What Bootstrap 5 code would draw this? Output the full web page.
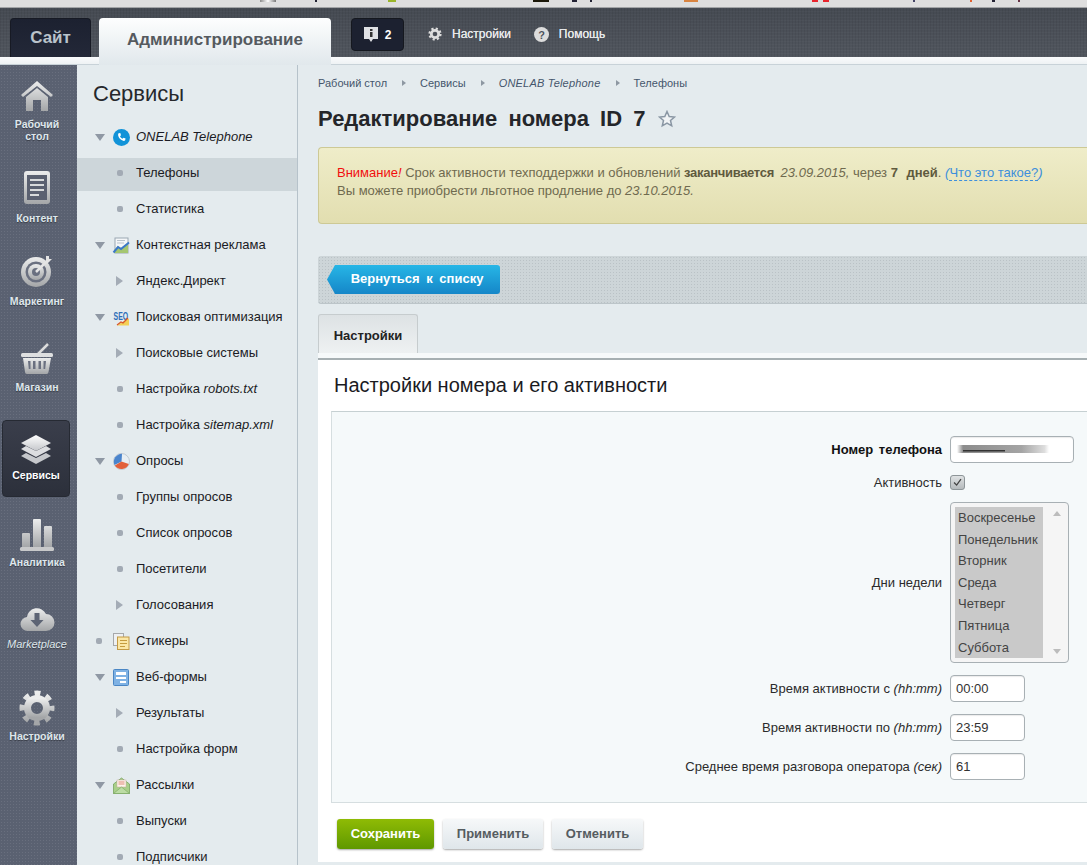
<!DOCTYPE html>
<html lang="ru">
<head>
  <meta charset="UTF-8" />
  <title>Редактирование номера ID 7</title>
  <link href="https://cdn.jsdelivr.net/npm/bootstrap@5.3.0/dist/css/bootstrap.min.css" rel="stylesheet">
  <style>
    html, body { height: 100%; overflow: hidden; }
    body { font-family: "Liberation Sans", Arial, sans-serif; font-size: 13px; color: #1c1c1c; background: #e4ebee; width: 1087px; height: 865px; }
    a { text-decoration: none; color: inherit; }
    .svg-defs { width: 0; height: 0; position: absolute; }

    /* top */
    .scrap-bar { height: 8px; background: #dedede; border-bottom: 1px solid #a2a4a6; }
    .scrap-bar div { height: 2px; background: linear-gradient(90deg, transparent 260px, #8a8a8a 260px, #fff 268px, #777 276px, transparent 276px, transparent 315px, #223 315px, #223 317px, transparent 317px, transparent 388px, #9ab52a 388px, #9ab52a 396px, transparent 396px, transparent 533px, #1b1708 533px, #1b1708 549px, transparent 549px, transparent 572px, #223 572px, #223 577px, transparent 577px, transparent 590px, #223 590px, #223 592px, transparent 592px, transparent 684px, #d98440 684px, #d98440 698px, transparent 698px, transparent 812px, #e8242c 812px, #e8242c 818px, transparent 818px, transparent 823px, #e8242c 823px, #e8242c 829px, transparent 829px, transparent 913px, #446 913px, #446 915px, transparent 915px, transparent 970px, #e06030 970px, #e06030 972px, transparent 972px, transparent 992px, #223 992px, #223 995px, transparent 995px, transparent 1018px, #634 1018px, #634 1020px, transparent 1020px); }
    .top-head { height: 49px; padding: 10px 0 0 10px; background-color: #4b5058; background-image: linear-gradient(rgba(255,255,255,.025) 1px, transparent 1px), linear-gradient(90deg, rgba(0,0,0,.06) 1px, transparent 1px), linear-gradient(#454a52, #51565e); background-size: 3px 3px, 3px 3px, 100% 100%; }
    .site-tab { width: 81px; height: 39px; background: linear-gradient(#1c2130, #232838); border: 1px solid #171a24; border-bottom: 0; border-radius: 4px 4px 0 0; color: #b9c3cb; font-size: 17px; font-weight: 700; }
    .admin-tab { width: 232px; height: 47px; margin-left: 8px; padding-top: 9px; background: linear-gradient(#fdfefe, #e1e8ec); border-radius: 4px 4px 0 0; color: #555a5f; font-size: 17px; font-weight: 700; position: relative; z-index: 2; text-align: center; }
    .info-btn { width: 53px; height: 33px; margin-left: 20px; background: #1c2130; border: 1px solid #15181f; border-radius: 4px; color: #fff; font-size: 12px; font-weight: 700; gap: 6px; }
    .head-link { color: #e4e6e8; font-size: 12px; margin-top: 9px; height: 14px; gap: 10px; text-shadow: 0 0 .4px #fff; }
    .help-link { margin-left: 23px; }
    .white-strip { height: 8px; background: linear-gradient(#fafbfc, #eef2f4); border-bottom: 1px solid #c8d2d8; }

    /* rail */
    .page-body { height: 800px; }
    .side-rail { width: 77px; flex: none; background-color: #5a6171; background-image: radial-gradient(rgba(255,255,255,.09) .7px, transparent .9px); background-size: 3px 3px; color: #dfe7ec; font-size: 10.5px; font-weight: 700; line-height: 12px; text-align: center; text-shadow: 0 1px 1px rgba(0,0,0,.4); }
    .rail-item { display: block; width: 68px; margin-left: 3px; }
    .rail-item svg { display: block; margin: 0 auto 5px; width: 36px; height: 36px; }
    .ri-1 { margin-top: 12px; }
    .ri-2 { margin-top: 28px; }
    .ri-2 svg { margin-bottom: 6px; }
    .ri-3 { margin-top: 29px; }
    .ri-3 svg { margin-bottom: 6px; }
    .ri-4 { margin-top: 34px; }
    .ri-4 svg { margin-bottom: 4px; }
    .ri-5 { margin: 27px 0 0 2px; padding: 11px 0 16px; background: linear-gradient(#3a3e4b, #2c303b); border: 1px solid #262a33; border-radius: 4px; color: #fff; height: 77px; }
    .ri-5 svg { margin-bottom: 1px; }
    .ri-6 { margin-top: 19px; }
    .ri-6 svg { margin-bottom: 4px; }
    .ri-7 { margin-top: 34px; font-size: 11px; font-style: italic; font-weight: 400; }
    .ri-7 svg { margin-bottom: 0; }
    .ri-8 { margin-top: 40px; }
    .ri-8 svg { margin-bottom: 4px; }

    /* tree */
    .tree-menu { width: 221px; flex: none; background: #e4ebee; border-right: 1px solid #b6c2ca; color: #1b1b24; }
    .tree-title { font-size: 22px; line-height: 26px; padding: 16px 0 0 16px; height: 54px; color: #26282c; }
    .tree-row { height: 36px; padding-left: 18px; }
    .tree-row.is-open { height: 33px; margin-top: 3px; padding-bottom: 3px; background: #cdd6da; }
    .tree-toggle { width: 18px; flex: none; }
    .tree-ico { width: 23px; flex: none; }
    .tree-ico svg { display: block; width: 17px; height: 17px; overflow: visible; }
    .arr-down { display: block; width: 0; height: 0; margin-left: 0; border: 5px solid transparent; border-top: 7px solid #8f98a4; border-bottom: 0; }
    .arr-right { display: block; width: 0; height: 0; margin-left: 3px; border: 5px solid transparent; border-left: 7px solid #a4acb6; border-right: 0; }
    .bullet { display: block; width: 6px; height: 6px; margin-left: 4px; border-radius: 2px; background: #a2aab4; }
    .bullet-top { margin-left: 1px; }

    /* main */
    .main-col { flex: 1 1 auto; min-width: 0; padding-left: 20px; overflow: hidden; }
    .crumbs { height: 35px; padding-top: 11px; color: #44566c; font-size: 11px; line-height: 14px; }
    .crumbs em { letter-spacing: .2px; }
    .crumb-arrow { width: 0; height: 0; margin: 0 14px 0 15px; border: 3.5px solid transparent; border-left: 4px solid #8e98a2; border-right: 0; }
    .page-title { font-size: 22px; font-weight: 700; line-height: 26px; margin: 0; height: 47px; padding-top: 6px; color: #24262a; word-spacing: 5px; }
    .page-title svg { width: 18px; height: 18px; margin-left: 1px; vertical-align: -2px; }
    .notice-box { height: 77px; padding: 16px 0 0 18px; margin: 0; border: 1px solid #cdc995; border-right: 0; border-radius: 4px 0 0 4px; background: linear-gradient(#efedc9, #e2deb0); color: #6f6a4f; font-size: 13px; line-height: 18px; white-space: nowrap; }
    .notice-box b { color: #5f5a3e; letter-spacing: -.3px; }
    .notice-box b.days-left { letter-spacing: 0; word-spacing: 5px; }
    .notice-box .warn { color: #f10e0e; }
    .notice-box .end-date { margin-left: 3px; }
    .notice-box .what { color: #3d8fdc; }
    .notice-box .what span { border-bottom: 1px dashed #3d8fdc; font-style: normal; }
    .tool-bar { height: 48px; margin-top: 32px; padding: 9px 0 0 9px; background-color: #cdd5d8; background-image: radial-gradient(rgba(120,130,135,.22) .7px, transparent .9px); background-size: 3px 3px; border-bottom: 1px solid #bcc5c9; border-radius: 3px 0 0 3px; }
    .btn.back-btn { display: block; width: 173px; height: 29px; padding: 0 0 2px 7px; border: 0; border-radius: 0 3px 3px 0; background: linear-gradient(#27b6e6, #1586c8); color: #fff; font-size: 13px; font-weight: 700; line-height: 27px; word-spacing: 3px; clip-path: polygon(0 50%, 8px 0, 100% 0, 100% 100%, 8px 100%); }
    .tab-line { height: 46px; margin-top: 10px; border-bottom: 2px solid #a6afb2; box-shadow: inset 0 -5px 0 #f6f9fa; }
    .nav-tabs.tab-strip { border: 0; }
    .tab-strip .nav-link { width: 100px; height: 39px; padding: 0; border: 1px solid #c6ccce; border-bottom: 0; border-radius: 3px 3px 0 0; background: linear-gradient(#dde2e4, #eef1f2); color: #222; font-size: 13px; font-weight: 700; line-height: 41px; text-align: center; }
    .sheet { height: 502px; background: #fff; }
    .sheet-title { margin: 0; height: 51px; padding: 13px 0 0 16px; font-size: 20px; font-weight: 400; line-height: 25px; color: #1b1b1f; }
    .form-box { margin-left: 13px; height: 392px; padding: 24px 0 0; background: #f5f9fa; border: 1px solid #d6dee0; border-top-color: #c6d0d2; border-right: 0; row-gap: 12px; }
    .fld-label { flex: 0 0 610px; margin: 0 8px 0 0; line-height: 15px; text-align: right; color: #2b2b2b; font-size: 13px; }
    .fld-label.strong { font-weight: 700; word-spacing: 2px; color: #111; }
    .form-control.fld-input { width: 75px; height: 27px; padding: 0 5px; border: 1px solid #a8b0b4; border-radius: 4px; box-shadow: inset 0 1px 1px rgba(0,0,0,.08); color: #333; font-size: 13px; font-family: inherit; }
    .phone-box { width: 124px; height: 27px; border: 1px solid #a8b0b4; border-radius: 4px; background: #fff; padding: 6px 0 0 6px; box-shadow: inset 0 1px 1px rgba(0,0,0,.08); }
    .phone-blur { display: block; width: 92px; height: 12px; filter: blur(.7px); background: linear-gradient(#333, #333) 6px 7px / 42px 1.500px no-repeat, linear-gradient(90deg, #fff, #8c8c8c 6px, #a4a4a4 70%, #ddd 95%, #fff) 0 2px / 100% 8px no-repeat; }
    .form-check-input.act-check { width: 15px; height: 15px; margin: 0; border: 1px solid #8d9598; border-radius: 3px; background-color: #c9cdce; background-image: url("data:image/svg+xml,%3csvg xmlns='http://www.w3.org/2000/svg' viewBox='0 0 15 15'%3e%3cpath fill='none' stroke='%23444' stroke-width='1.5' d='M3.5 7.5l3 3 5-7'/%3e%3c/svg%3e"), linear-gradient(#dfe2e3, #b5babc); background-size: 100% 100%; }
    .days-wrap { position: relative; width: 119px; height: 161px; }
    .days-wrap::before, .days-wrap::after { content: ""; position: absolute; right: 8px; width: 0; height: 0; border: 4px solid transparent; pointer-events: none; }
    .days-wrap::before { top: 9px; border-top: 0; border-bottom: 5px solid #bcbcbc; }
    .days-wrap::after { bottom: 9px; border-bottom: 0; border-top: 5px solid #bcbcbc; }
    .days-select { display: block; width: 119px; height: 161px; padding: 4px 25px 4px 4px; border: 1px solid #a8b0b4; border-radius: 4px; background: #f5f5f5; color: #444; font: 13px "Liberation Sans", Arial, sans-serif; overflow: hidden; outline: 0; }
    .days-select option { height: 21.6px; padding: 3px 0 0 3px; line-height: 15px; min-height: 21.6px; background: #c9c9c9 linear-gradient(#c9c9c9, #c9c9c9); color: #444; }
    .act-bar { padding: 16px 0 0 19px; gap: 9px; }
    .btn.act-btn { height: 30px; padding: 0; border: 0; border-radius: 3px; font-size: 13px; font-weight: 700; line-height: 30px; box-shadow: 0 1px 2px rgba(0,0,0,.35); }
    .btn.act-save { width: 97px; background: linear-gradient(#8fbb05, #5f9800); color: #fff; }
    .btn.act-plain { background: linear-gradient(#f6f8f9, #dfe6ea); color: #555c60; }
    .w-apply { width: 100px; }
    .w-cancel { width: 91px; }
  </style>
</head>
<body>
  <svg class="svg-defs">
    <defs>
      <linearGradient id="metal" x1="0" y1="0" x2="0" y2="1">
        <stop offset="0" stop-color="#eceded" />
        <stop offset="1" stop-color="#a4a6a8" />
      </linearGradient>
      <linearGradient id="metalW" x1="0" y1="0" x2="0" y2="1">
        <stop offset="0" stop-color="#fff" />
        <stop offset="1" stop-color="#c4c6ca" />
      </linearGradient>
    </defs>
  </svg>

  <div class="scrap-bar"><div></div></div>

  <header class="top-head d-flex align-items-start">
    <a href="#" class="site-tab d-flex align-items-center justify-content-center">Сайт</a>
    <a href="#" class="admin-tab">Администрирование</a>
    <a href="#" class="info-btn d-flex align-items-center justify-content-center">
      <svg width="15" height="17" viewBox="0 0 15 17"><path fill="#dfe1e4" d="M0 1h14v12H9l-2 3-2-3H0z" /><path fill="#333" d="M6 3h2.500v2H6zM6 6h2.500v5H6z" /></svg>
      2
    </a>
    <a href="#" class="head-link d-flex align-items-center ms-4">
      <svg width="14" height="14" viewBox="0 0 36 36"><circle cx="18" cy="18" r="14" fill="none" stroke="#ddd" stroke-width="6" stroke-dasharray="5.500 5.500" /><circle cx="18" cy="18" r="9.500" fill="none" stroke="#ddd" stroke-width="7" /></svg>
      Настройки
    </a>
    <a href="#" class="head-link help-link d-flex align-items-center">
      <svg width="15" height="15" viewBox="0 0 15 15"><circle cx="7.500" cy="7.500" r="7.500" fill="#dcdcdc" /><text x="7.500" y="11.500" text-anchor="middle" font-size="11" font-weight="700" font-family="Liberation Sans" fill="#4b5058">?</text></svg>
      Помощь
    </a>
  </header>
  <div class="white-strip"></div>

  <div class="page-body d-flex">
    <!-- Left rail -->
    <nav class="side-rail">
      <a href="#" class="rail-item ri-1">
        <svg viewBox="0 0 36 36"><path fill="url(#metal)" d="M18 4 2 18l2 2L18 9l14 11 2-2zM7 20 18 11l11 9v14H22V23h-8v11H7z" /></svg>
        Рабочий<br>стол
      </a>
      <a href="#" class="rail-item ri-2">
        <svg viewBox="0 0 36 36"><rect x="5" y="1" width="26" height="33" rx="3" fill="url(#metal)" /><rect x="8" y="5" width="20" height="25" fill="#5a6070" /><path fill="#d8dadb" d="M11 9h14v2H11zM11 14h14v2H11zM11 19h14v2H11zM11 24h9v2h-9z" /></svg>
        Контент
      </a>
      <a href="#" class="rail-item ri-3">
        <svg viewBox="0 0 36 36"><circle cx="17" cy="19" r="15" fill="url(#metal)" /><circle cx="17" cy="19" r="10.500" fill="#6a7080" /><circle cx="17" cy="19" r="8" fill="url(#metal)" /><circle cx="17" cy="19" r="4" fill="#6a7080" /><path stroke="#e4e4e4" stroke-width="2.500" d="M17 19 30 6" /><path fill="#e4e4e4" d="M27 3h3v3h3l-4 4h-2z" /></svg>
        Маркетинг
      </a>
      <a href="#" class="rail-item ri-4">
        <svg viewBox="0 0 36 36"><path stroke="#dcdcdc" stroke-width="2.500" d="M19 13 29 3" /><rect x="2" y="12" width="32" height="4" rx="1.500" fill="#dedfe0" /><path fill="url(#metal)" d="M4 17h28l-2.500 14a2 2 0 0 1-2 2h-19.500a2 2 0 0 1-2-2z" /><path fill="#6a7080" d="M9 20h2.500v8H9.800zM14 20h2.500v8H14zM19.500 20H22v8h-2.500zM24.500 20H27l-.8 8h-1.700z" /></svg>
        Магазин
      </a>
      <a href="#" class="rail-item ri-5">
        <svg viewBox="0 0 36 36"><path fill="#c6c8cc" d="m3 24 5-3 10 5 10-5 5 3-15 8z" /><path fill="#dcdde0" d="m3 17 5-3 10 5 10-5 5 3-15 8z" /><path fill="url(#metalW)" d="m3 11 15-8 15 8-15 8z" /></svg>
        Сервисы
      </a>
      <a href="#" class="rail-item ri-6">
        <svg viewBox="0 0 36 36"><path fill="url(#metal)" d="M3 18a1 1 0 0 1 1-1h6a1 1 0 0 1 1 1v13H3zM14 4a1 1 0 0 1 1-1h6a1 1 0 0 1 1 1v27h-8zM25 11a1 1 0 0 1 1-1h6a1 1 0 0 1 1 1v20h-8z" /><rect x="1" y="31" width="34" height="4" rx="1.500" fill="#c8c9ca" /></svg>
        Аналитика
      </a>
      <a href="#" class="rail-item ri-7">
        <svg viewBox="0 0 36 36"><path fill="url(#metal)" d="M9 29a7 7 0 0 1-1-14 10 10 0 0 1 19-3 8.500 8.500 0 0 1 0 17z" /><path fill="#5d6474" d="M15.500 11h5v7h4l-6.500 7-6.500-7h4z" /></svg>
        Marketplace
      </a>
      <a href="#" class="rail-item ri-8">
        <svg viewBox="0 0 36 36"><circle cx="18" cy="18" r="14" fill="none" stroke="url(#metal)" stroke-width="7" stroke-dasharray="5.500 5.500" stroke-dashoffset="2.750" /><circle cx="18" cy="18" r="9.500" fill="none" stroke="url(#metal)" stroke-width="7" /></svg>
        Настройки
      </a>
    </nav>

    <!-- Menu tree -->
    <aside class="tree-menu">
      <div class="tree-title">Сервисы</div>
      <a href="#" class="tree-row d-flex align-items-center"><span class="tree-toggle"><i class="arr-down"></i></span><span class="tree-ico"><svg viewBox="0 0 17 17"><circle cx="8.500" cy="8.500" r="8.500" fill="#1193d8" /><path fill="#fff" d="M5.600 4.300 7.300 3.900 8 6.200 7 7.200c.4 1 1.400 2 2.500 2.500l1-1 2.100 .9-.5 1.700c-.4.700-1.500.8-2.500.3C7.500 10.800 5.900 8.900 5.300 7c-.3-1.200-.2-2.200.3-2.700z" /></svg></span><em>ONELAB Telephone</em></a>
      <a href="#" class="tree-row is-open d-flex align-items-center"><span class="tree-toggle"></span><span class="tree-ico"><i class="bullet"></i></span>Телефоны</a>
      <a href="#" class="tree-row d-flex align-items-center"><span class="tree-toggle"></span><span class="tree-ico"><i class="bullet"></i></span>Статистика</a>
      <a href="#" class="tree-row d-flex align-items-center"><span class="tree-toggle"><i class="arr-down"></i></span><span class="tree-ico"><svg viewBox="0 0 17 17"><rect x="2" y="1" width="13" height="15" fill="#f4f6f8" stroke="#9aa7b2" /><path fill="#b8c2cc" d="M4 3h8v1H4zM4 5.500h7v1H4z" /><path fill="#a5c670" d="M1 16v-3l4-4 3 2 7-5v10z" /><path fill="none" stroke="#3c78c8" stroke-width="2" d="M.5 15.500 5 10l3 2 8-6.500" /></svg></span>Контекстная реклама</a>
      <a href="#" class="tree-row d-flex align-items-center"><span class="tree-toggle"></span><span class="tree-ico"><i class="arr-right"></i></span>Яндекс.Директ</a>
      <a href="#" class="tree-row d-flex align-items-center"><span class="tree-toggle"><i class="arr-down"></i></span><span class="tree-ico"><svg viewBox="0 0 17 17"><text transform="scale(.6 1)" x="1" y="10.500" font-size="11.500" font-weight="700" font-family="Liberation Sans" fill="#2f6fb8">SEO</text><path fill="#f3cf55" d="M4 16.500 14 10l2 0v6.500z" /><path fill="none" stroke="#d8562a" stroke-width="1.200" d="m4 16 4-3 2 1 5-5" /></svg></span>Поисковая оптимизация</a>
      <a href="#" class="tree-row d-flex align-items-center"><span class="tree-toggle"></span><span class="tree-ico"><i class="arr-right"></i></span>Поисковые системы</a>
      <a href="#" class="tree-row d-flex align-items-center"><span class="tree-toggle"></span><span class="tree-ico"><i class="bullet"></i></span><span>Настройка <em>robots.txt</em></span></a>
      <a href="#" class="tree-row d-flex align-items-center"><span class="tree-toggle"></span><span class="tree-ico"><i class="bullet"></i></span><span>Настройка <em>sitemap.xml</em></span></a>
      <a href="#" class="tree-row d-flex align-items-center"><span class="tree-toggle"><i class="arr-down"></i></span><span class="tree-ico"><svg viewBox="0 0 17 17"><circle cx="8.500" cy="8.500" r="8" fill="#e8eef2" stroke="#a8b2bc" stroke-width=".6" /><path fill="#4a84cc" d="M8.500 8.500 9 .8A8 8 0 0 0 1.500 12z" /><path fill="#e2603a" d="M8.500 8.500 1.800 12.500a8 8 0 0 0 14-1.500z" /></svg></span>Опросы</a>
      <a href="#" class="tree-row d-flex align-items-center"><span class="tree-toggle"></span><span class="tree-ico"><i class="bullet"></i></span>Группы опросов</a>
      <a href="#" class="tree-row d-flex align-items-center"><span class="tree-toggle"></span><span class="tree-ico"><i class="bullet"></i></span>Список опросов</a>
      <a href="#" class="tree-row d-flex align-items-center"><span class="tree-toggle"></span><span class="tree-ico"><i class="bullet"></i></span>Посетители</a>
      <a href="#" class="tree-row d-flex align-items-center"><span class="tree-toggle"></span><span class="tree-ico"><i class="arr-right"></i></span>Голосования</a>
      <a href="#" class="tree-row d-flex align-items-center"><span class="tree-toggle"><i class="bullet bullet-top"></i></span><span class="tree-ico"><svg viewBox="0 0 17 17"><rect x=".5" y=".5" width="10" height="12" fill="#eef0f2" stroke="#a6a8aa" /><rect x="4.500" y="4" width="11.500" height="12.500" fill="#fbe7a6" stroke="#c39a45" /><path fill="#c59b3e" d="M7 7h7v1H7zM7 10h7v1H7zM7 13h5v1H7z" /></svg></span>Стикеры</a>
      <a href="#" class="tree-row d-flex align-items-center"><span class="tree-toggle"><i class="arr-down"></i></span><span class="tree-ico"><svg viewBox="0 0 17 17"><rect x=".5" y=".5" width="15" height="16" rx="1" fill="#7fb2e4" stroke="#4a86c4" /><path fill="#fff" d="M3 3h10v3H3zM3 8h10v2H3zM7 12h6v2H7z" /></svg></span>Веб-формы</a>
      <a href="#" class="tree-row d-flex align-items-center"><span class="tree-toggle"></span><span class="tree-ico"><i class="arr-right"></i></span>Результаты</a>
      <a href="#" class="tree-row d-flex align-items-center"><span class="tree-toggle"></span><span class="tree-ico"><i class="bullet"></i></span>Настройка форм</a>
      <a href="#" class="tree-row d-flex align-items-center"><span class="tree-toggle"><i class="arr-down"></i></span><span class="tree-ico"><svg viewBox="0 0 17 17"><path fill="#a9cf8a" stroke="#6d9c52" stroke-width=".7" d="M.5 7 8.500 1l8 6v9.500H.5z" /><rect x="4" y="3" width="9" height="7" fill="#fdf4ea" stroke="#c9a9a0" stroke-width=".5" /><path fill="#df8a7c" d="M5.500 4.500h6v1h-6zM5.500 6.500h6v1h-6z" /><path fill="#bcdca4" stroke="#6d9c52" stroke-width=".5" d="m.5 16.500 8-6.500 8 6.500z" /></svg></span>Рассылки</a>
      <a href="#" class="tree-row d-flex align-items-center"><span class="tree-toggle"></span><span class="tree-ico"><i class="bullet"></i></span>Выпуски</a>
      <a href="#" class="tree-row d-flex align-items-center"><span class="tree-toggle"></span><span class="tree-ico"><i class="bullet"></i></span>Подписчики</a>
    </aside>

    <!-- Content -->
    <main class="main-col">
      <div class="crumbs d-flex align-items-start">
        <a href="#">Рабочий стол</a><i class="crumb-arrow mt-1"></i>
        <a href="#">Сервисы</a><i class="crumb-arrow mt-1"></i>
        <a href="#"><em>ONELAB Telephone</em></a><i class="crumb-arrow mt-1"></i>
        <a href="#">Телефоны</a>
      </div>
      <h1 class="page-title">Редактирование номера ID 7
        <svg viewBox="0 0 18 18"><path fill="#f0f3f5" stroke="#8a97a4" stroke-width="1.500" d="m9 1.500 2.200 5 5.300.5-4 3.500 1.200 5.300L9 13.100l-4.700 2.700 1.200-5.300-4-3.500 5.300-.5z" /></svg>
      </h1>
      <div class="notice-box">
        <span class="warn">Внимание<em>!</em></span> Срок активности техподдержки и обновлений <b>заканчивается</b> <em class="end-date">23.09.2015,</em> через <b class="days-left">7 дней</b>. <em class="what">(<span>Что это такое?</span>)</em><br>
        Вы можете приобрести льготное продление до <em>23.10.2015.</em>
      </div>
      <div class="tool-bar">
        <a href="#" class="btn back-btn">Вернуться к списку</a>
      </div>
      <div class="tab-line">
        <ul class="nav nav-tabs tab-strip">
          <li class="nav-item"><a class="nav-link" href="#">Настройки</a></li>
        </ul>
      </div>
      <section class="sheet">
        <h2 class="sheet-title">Настройки номера и его активности</h2>
        <form class="form-box d-flex flex-column">
          <div class="d-flex align-items-center">
            <label class="fld-label strong">Номер телефона</label>
            <div class="phone-box"><span class="phone-blur"></span></div>
          </div>
          <div class="d-flex align-items-center">
            <label class="fld-label" for="act">Активность</label>
            <input class="form-check-input act-check" id="act" type="checkbox" checked>
          </div>
          <div class="d-flex align-items-center">
            <label class="fld-label" for="days">Дни недели</label>
            <div class="days-wrap">
              <select class="days-select" id="days" multiple size="7">
                <option selected>Воскресенье</option>
                <option selected>Понедельник</option>
                <option selected>Вторник</option>
                <option selected>Среда</option>
                <option selected>Четверг</option>
                <option selected>Пятница</option>
                <option selected>Суббота</option>
              </select>
            </div>
          </div>
          <div class="d-flex align-items-center">
            <label class="fld-label">Время активности с <em>(hh:mm)</em></label>
            <input class="form-control fld-input" type="text" value="00:00">
          </div>
          <div class="d-flex align-items-center">
            <label class="fld-label">Время активности по <em>(hh:mm)</em></label>
            <input class="form-control fld-input" type="text" value="23:59">
          </div>
          <div class="d-flex align-items-center">
            <label class="fld-label">Среднее время разговора оператора <em>(сек)</em></label>
            <input class="form-control fld-input" type="text" value="61">
          </div>
        </form>
        <div class="act-bar d-flex">
          <button type="button" class="btn act-btn act-save">Сохранить</button>
          <button type="button" class="btn act-btn act-plain w-apply">Применить</button>
          <button type="button" class="btn act-btn act-plain w-cancel">Отменить</button>
        </div>
      </section>
    </main>
  </div>

  <script src="https://cdn.jsdelivr.net/npm/bootstrap@5.3.0/dist/js/bootstrap.bundle.min.js"></script>
</body>
</html>
